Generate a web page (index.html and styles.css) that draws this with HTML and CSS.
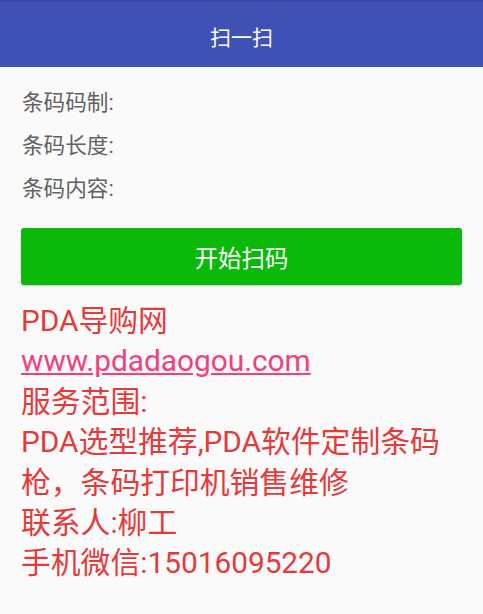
FILE: index.html
```html
<!DOCTYPE html>
<html lang="zh-CN">
  <head>
    <meta charset="UTF-8" />
    <meta name="viewport" content="width=device-width, initial-scale=1.0" />
    <title>扫一扫</title>
    <link rel="stylesheet" href="styles.css">
  </head>
  <body>
    <header class="toolbar">
      <h1>扫一扫</h1>
    </header>
    <div class="content">
      <div class="fields">
        <p>条码码制:</p>
        <p>条码长度:</p>
        <p>条码内容:</p>
      </div>
      <button class="scan-btn">开始扫码</button>
      <div class="info">
        <p>PDA导购网</p>
        <p><a href="">www.pdadaogou.com</a></p>
        <p>服务范围:</p>
        <p>PDA选型推荐,PDA软件定制条码枪，条码打印机销售维修</p>
        <p>联系人:柳工</p>
        <p>手机微信:15016095220</p>
      </div>
    </div>
  </body>
</html>
```

FILE: styles.css
```css
body {
  margin: 0;
  background: #fafafa;
  font-family: Roboto, "Noto Sans CJK SC", sans-serif;
}
.toolbar {
  box-sizing: border-box;
  height: 67px;
  padding-top: 3px;
  border-top: 2px solid #3949ab;
  background: #3f51b5;
  display: flex;
  align-items: center;
  justify-content: center;
}
.toolbar h1 {
  margin: 0;
  color: #fff;
  font-size: 21px;
  font-weight: normal;
}
.content {
  padding: 14px 21px 0 21px;
}
.fields p {
  margin: 0;
  line-height: 43px;
  font-size: 21.6px;
  color: #616161;
  padding-left: 1px;
}
.scan-btn {
  display: block;
  width: 100%;
  height: 57px;
  margin-top: 18px;
  border: none;
  border-radius: 3px;
  background: #0ab90a;
  color: #fff;
  font-family: Roboto, "Noto Sans CJK SC", sans-serif;
  font-size: 23.4px;
  box-shadow: 0 1px 2px rgba(0, 0, 0, 0.2);
}
.info {
  margin-top: 16px;
}
.info p {
  margin: 0;
  font-size: 29.8px;
  line-height: 40.4px;
  color: #e53a3a;
}
.info a {
  color: #f2407a;
  text-decoration: underline;
}
```
